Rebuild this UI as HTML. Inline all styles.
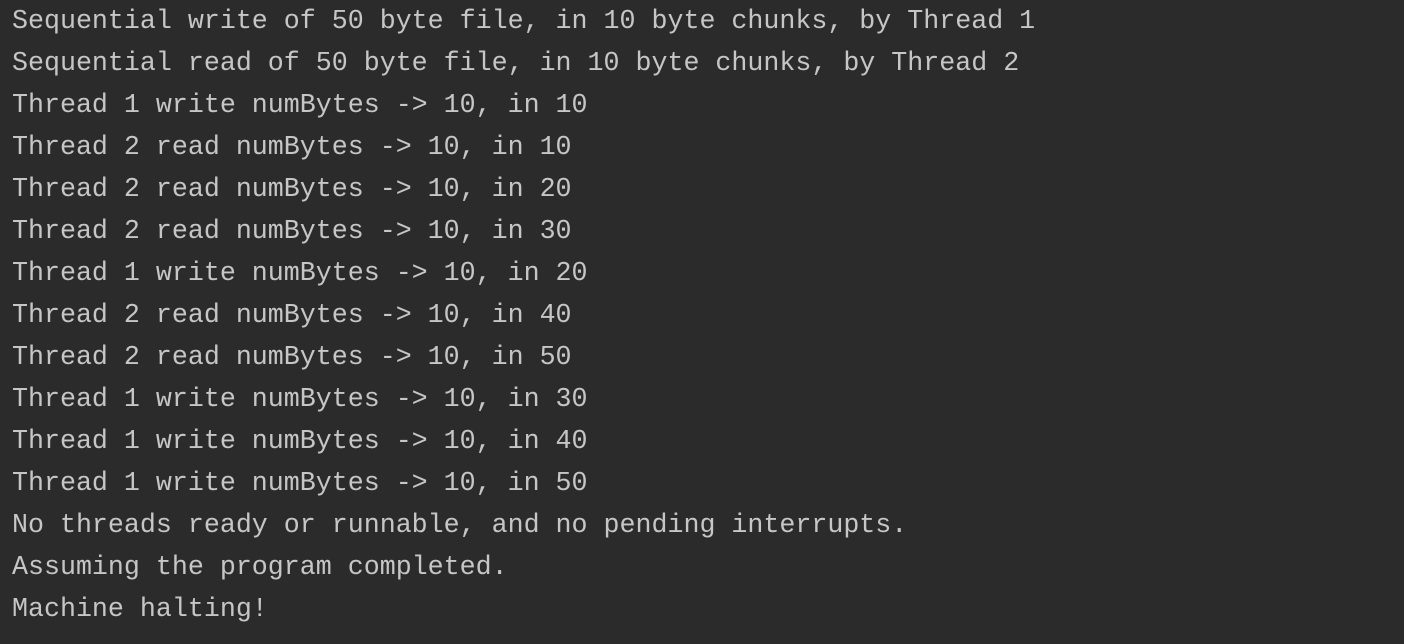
<!DOCTYPE html>
<html><head><meta charset="utf-8"><style>
html,body{margin:0;padding:0;background:#2b2b2b;width:1404px;height:644px;overflow:hidden}
pre{margin:0;padding:1px 0 0 12px;font-family:"Liberation Mono",monospace;font-size:26.65px;line-height:42px;color:#c6c6c6;}
</style></head><body><pre>Sequential write of 50 byte file, in 10 byte chunks, by Thread 1
Sequential read of 50 byte file, in 10 byte chunks, by Thread 2
Thread 1 write numBytes -&gt; 10, in 10
Thread 2 read numBytes -&gt; 10, in 10
Thread 2 read numBytes -&gt; 10, in 20
Thread 2 read numBytes -&gt; 10, in 30
Thread 1 write numBytes -&gt; 10, in 20
Thread 2 read numBytes -&gt; 10, in 40
Thread 2 read numBytes -&gt; 10, in 50
Thread 1 write numBytes -&gt; 10, in 30
Thread 1 write numBytes -&gt; 10, in 40
Thread 1 write numBytes -&gt; 10, in 50
No threads ready or runnable, and no pending interrupts.
Assuming the program completed.
Machine halting!</pre></body></html>
